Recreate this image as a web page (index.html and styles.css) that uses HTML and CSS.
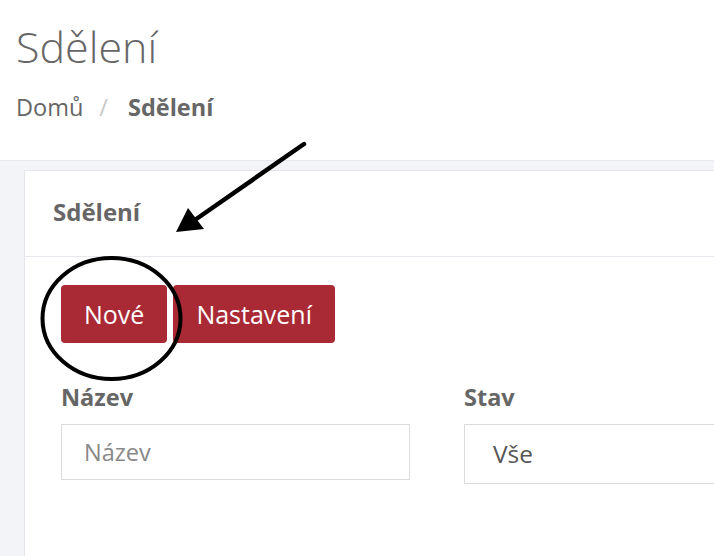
FILE: index.html
```html
<!DOCTYPE html>
<html lang="cs">
<head>
<meta charset="utf-8">
<title>Sdělení</title>
<link rel="stylesheet" href="styles.css">
</head>
<body>
<header class="page-header">
  <h1 class="page-title">Sdělení</h1>
  <nav class="breadcrumb">
    <span class="crumb">Domů</span><span class="sep">/</span><span class="crumb crumb-active">Sdělení</span>
  </nav>
</header>
<main class="content">
  <section class="card">
    <div class="card-header">
      <h2 class="card-title">Sdělení</h2>
    </div>
    <div class="card-body">
      <div class="actions">
        <button class="btn">Nové</button>
        <button class="btn">Nastavení</button>
      </div>
      <div class="filters">
        <div class="field">
          <label class="field-label" for="nazev">Název</label>
          <input id="nazev" class="input" type="text" placeholder="Název">
        </div>
        <div class="field">
          <label class="field-label" for="stav">Stav</label>
          <select id="stav" class="select">
            <option>Vše</option>
          </select>
        </div>
      </div>
    </div>
  </section>
</main>
<svg class="annotations" width="714" height="556" viewBox="0 0 714 556">
  <line x1="304" y1="144" x2="192" y2="222" stroke="#000" stroke-width="4.5" stroke-linecap="round"/>
  <polygon points="176,232 188,208 204,229" fill="#000"/>
  <ellipse cx="111.5" cy="318.5" rx="69" ry="60.5" fill="none" stroke="#000" stroke-width="4"/>
</svg>
</body>
</html>
```
FILE: styles.css
```css
* { box-sizing: border-box; }

html, body {
  margin: 0;
  padding: 0;
}

body {
  width: 714px;
  height: 556px;
  overflow: hidden;
  position: relative;
  font-family: "Open Sans", "Noto Sans", sans-serif;
  color: #666;
  background: #f3f4f8;
}

.page-header {
  height: 161px;
  background: #fff;
  border-bottom: 1px solid #e6e8ee;
  padding: 21px 16px 0;
}

.page-title {
  margin: 0;
  font-size: 43px;
  font-weight: 300;
  line-height: 51px;
  color: #666;
}

.breadcrumb {
  margin-top: 22px;
  font-size: 23.5px;
  line-height: 27.6px;
  display: flex;
  white-space: nowrap;
}

.sep {
  color: #c8c8c8;
  margin: 0 20px 0 16px;
}

.crumb-active {
  font-weight: 700;
  color: #666;
}

.content {
  height: 395px;
  overflow: hidden;
  padding: 9px 0 0 24px;
}

.card {
  width: 690px;
  height: 400px;
  background: #fff;
  border: 1px solid #e4e6eb;
  border-right: 0;
}

.card-header {
  height: 86px;
  border-bottom: 1px solid #e6e8ee;
  padding: 27px 28px 0;
}

.card-title {
  margin: 0;
  font-size: 24px;
  line-height: 27.6px;
  font-weight: 700;
  color: #666;
}

.card-body {
  padding: 28px 36px 0;
}

.actions {
  display: flex;
  gap: 6px;
}

.btn {
  font-family: inherit;
  font-size: 25px;
  line-height: 36px;
  padding: 11px 23px;
  color: #fff;
  background: #a92935;
  border: 0;
  border-radius: 4px;
}

.filters {
  display: grid;
  grid-template-columns: 349px 349px;
  column-gap: 54px;
  margin-top: 41px;
}

.field {
  display: flex;
  flex-direction: column;
}

.field-label {
  font-size: 23.5px;
  line-height: 27.6px;
  font-weight: 700;
  color: #666;
  margin-bottom: 12px;
}

.input {
  height: 56px;
  border: 1px solid #dcdcdc;
  padding: 0 22px;
  font-family: inherit;
  font-size: 23.5px;
  color: #555;
  outline: none;
}

.input::placeholder {
  color: #888;
}

.select {
  appearance: none;
  -webkit-appearance: none;
  height: 60px;
  border: 1px solid #dcdcdc;
  border-radius: 0;
  background: #fff;
  padding: 0 28px;
  font-family: inherit;
  font-size: 24.5px;
  color: #555;
  outline: none;
}

.annotations {
  position: absolute;
  left: 0;
  top: 0;
  pointer-events: none;
}
```
